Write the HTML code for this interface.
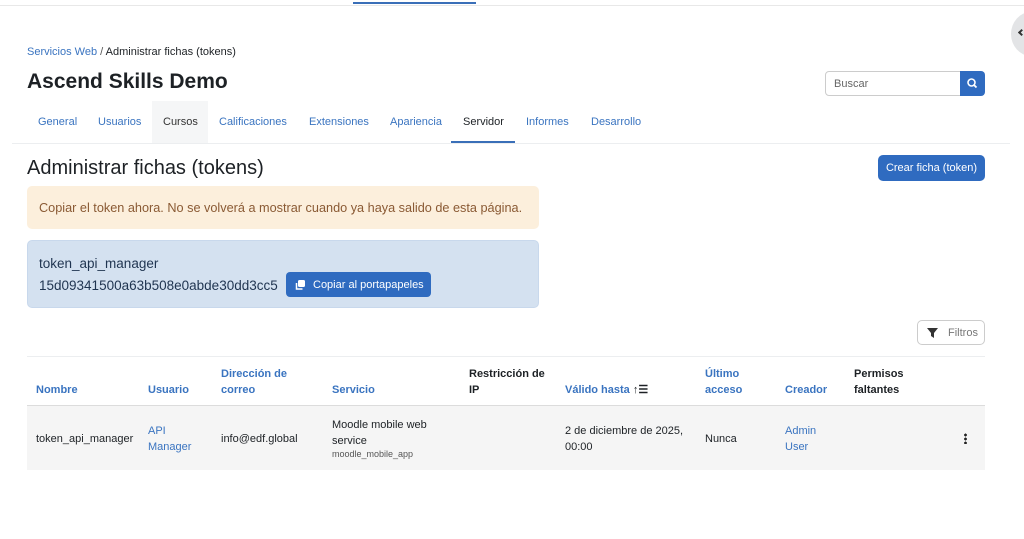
<!DOCTYPE html>
<html><head><meta charset="utf-8"><style>
*{box-sizing:border-box;margin:0;padding:0}
body{width:1024px;height:539px;overflow:hidden;background:#fff;font-family:"Liberation Sans",sans-serif;color:#1d2125;position:relative}
.a{position:absolute;white-space:nowrap}
.bl{color:#0f6cbf}
.h{font-size:11px;font-weight:bold;line-height:16px}
.c{font-size:11px;line-height:16px}
</style></head><body>
<div class="a" style="left:0;top:5px;width:1024px;height:1px;background:#e8e8e8"></div>
<div class="a" style="left:353px;top:2px;width:123px;height:2px;background:#3a6fb8"></div>
<div class="a" style="left:1011px;top:12px;width:40px;height:44px;border-radius:50%;background:#e3e4e6"></div>
<div class="a" style="left:1019px;top:30px;width:5px;height:5px;border-left:2px solid #333;border-bottom:2px solid #333;transform:rotate(45deg)"></div>

<div class="a" style="left:27px;top:46px;font-size:11px"><span style="color:#3a74c0">Servicios Web</span> <span style="color:#555">/</span> Administrar fichas (tokens)</div>
<div class="a" style="left:27px;top:70px;font-size:21px;font-weight:bold">Ascend Skills Demo</div>
<div class="a" style="left:825px;top:71px;width:136px;height:25px;border:1px solid #ccc;border-radius:4px 0 0 4px;font-size:11px;color:#666;padding:6px 8px">Buscar</div>
<div class="a" style="left:960px;top:71px;width:25px;height:25px;background:#2f6bc0;border-radius:0 4px 4px 0">
<svg width="25" height="25" viewBox="0 0 25 25"><circle cx="11.5" cy="11.5" r="3.5" fill="none" stroke="#fff" stroke-width="1.6"/><line x1="14" y1="14" x2="16.5" y2="16.5" stroke="#fff" stroke-width="1.8"/></svg></div>

<div class="a" style="left:152px;top:101px;width:56px;height:43px;background:#f5f6f7"></div>
<div class="a" style="left:0;top:116px;font-size:11px;color:#3a74c0;width:700px">
<span class="a" style="left:38px">General</span><span class="a" style="left:98px">Usuarios</span><span class="a" style="left:163px;color:#333">Cursos</span><span class="a" style="left:219px">Calificaciones</span><span class="a" style="left:309px">Extensiones</span><span class="a" style="left:390px">Apariencia</span><span class="a" style="left:463px;color:#1d2125">Servidor</span><span class="a" style="left:526px">Informes</span><span class="a" style="left:591px">Desarrollo</span></div>
<div class="a" style="left:12px;top:143px;width:998px;height:1px;background:#eceef0"></div>
<div class="a" style="left:451px;top:141px;width:64px;height:2px;background:#3a6fb8"></div>

<div class="a" style="left:27px;top:157px;font-size:20px">Administrar fichas (tokens)</div>
<div class="a" style="left:878px;top:155px;width:107px;height:26px;background:#2f6bc0;border-radius:5px;color:#fff;font-size:11px;text-align:center;line-height:27px">Crear ficha (token)</div>

<div class="a" style="left:27px;top:186px;width:512px;height:43px;background:#fcefdc;border-radius:5px;color:#8a5a34;font-size:12.7px;padding:15px 12px">Copiar el token ahora. No se volverá a mostrar cuando ya haya salido de esta página.</div>
<div class="a" style="left:27px;top:240px;width:512px;height:68px;background:#d4e1f0;border:1px solid #c8d8ec;border-radius:5px"></div>
<div class="a" style="left:39px;top:256px;font-size:13.5px;color:#1f3450">token_api_manager</div>
<div class="a" style="left:39px;top:278px;font-size:13.5px;color:#1f3450">15d09341500a63b508e0abde30dd3cc5</div>
<div class="a" style="left:286px;top:272px;width:145px;height:25px;background:#2f6bc0;border-radius:4px;color:#fff;font-size:11px;line-height:26px;padding-left:27px">Copiar al portapapeles</div>
<svg class="a" style="left:294px;top:279px" width="12" height="12" viewBox="0 0 12 12"><rect x="4" y="1" width="7" height="7" rx="1.5" fill="#fff"/><path d="M2.5 4v6h6" fill="none" stroke="#fff" stroke-width="1.5"/></svg>

<div class="a" style="left:917px;top:320px;width:68px;height:25px;border:1px solid #ccc;border-radius:5px;font-size:11px;color:#777;line-height:25px;padding-left:30px">Filtros</div>
<svg class="a" style="left:927px;top:328px" width="11" height="10" viewBox="0 0 11 10"><path d="M0 0h11L7 5v5L4 8V5z" fill="#333"/></svg>

<div class="a" style="left:27px;top:356px;width:958px;height:1px;background:#eceef0"></div>
<div class="a" style="left:27px;top:405px;width:958px;height:65px;background:#f5f5f5;border-top:1px solid #dcdcdc"></div>
<div class="h a" style="left:36px;top:382px;color:#3a74c0">Nombre</div>
<div class="h a" style="left:148px;top:382px;color:#3a74c0">Usuario</div>
<div class="h a" style="left:221px;top:366px;color:#3a74c0">Dirección de<br>correo</div>
<div class="h a" style="left:332px;top:382px;color:#3a74c0">Servicio</div>
<div class="h a" style="left:469px;top:366px">Restricción de<br>IP</div>
<div class="h a" style="left:565px;top:382px;color:#3a74c0">Válido hasta <span style="color:#1d2125">↑☰</span></div>
<div class="h a" style="left:705px;top:366px;color:#3a74c0">Último<br>acceso</div>
<div class="h a" style="left:785px;top:382px;color:#3a74c0">Creador</div>
<div class="h a" style="left:854px;top:366px">Permisos<br>faltantes</div>

<div class="c a" style="left:36px;top:431px">token_api_manager</div>
<div class="c a" style="left:148px;top:423px;color:#3a74c0">API<br>Manager</div>
<div class="c a" style="left:221px;top:431px">info@edf.global</div>
<div class="c a" style="left:332px;top:417px">Moodle mobile web<br>service</div>
<div class="a" style="left:332px;top:449px;font-size:9px;color:#555">moodle_mobile_app</div>
<div class="c a" style="left:565px;top:423px">2 de diciembre de 2025,<br>00:00</div>
<div class="c a" style="left:705px;top:431px">Nunca</div>
<div class="c a" style="left:785px;top:423px;color:#3a74c0">Admin<br>User</div>
<div class="a" style="left:964px;top:433px;width:3px;height:11px;background:radial-gradient(circle,#222 1.3px,transparent 1.5px) 0 0/3px 4px"></div>
</body></html>
